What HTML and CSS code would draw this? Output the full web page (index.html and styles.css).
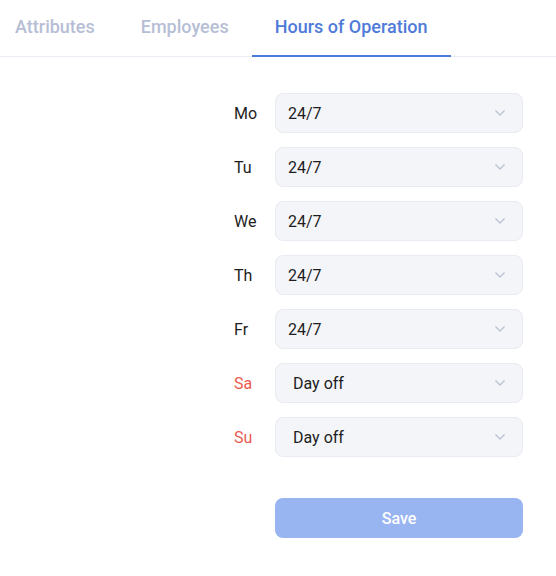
FILE: index.html
```html
<!DOCTYPE html>
<html lang="en">
<head>
<meta charset="utf-8">
<title>Hours of Operation</title>
<link rel="stylesheet" href="styles.css">
</head>
<body>
<nav class="tabs">
  <a class="tab tab-first">Attributes</a>
  <a class="tab">Employees</a>
  <a class="tab tab-active">Hours of Operation</a>
</nav>
<main class="content">
  <form class="hours">
    <div class="row"><span class="day">Mo</span><div class="select"><span class="value">24/7</span><svg class="chev" viewBox="0 0 12 8"><path d="M1.5 1.5 6 6l4.5-4.5"/></svg></div></div>
    <div class="row"><span class="day">Tu</span><div class="select"><span class="value">24/7</span><svg class="chev" viewBox="0 0 12 8"><path d="M1.5 1.5 6 6l4.5-4.5"/></svg></div></div>
    <div class="row"><span class="day">We</span><div class="select"><span class="value">24/7</span><svg class="chev" viewBox="0 0 12 8"><path d="M1.5 1.5 6 6l4.5-4.5"/></svg></div></div>
    <div class="row"><span class="day">Th</span><div class="select"><span class="value">24/7</span><svg class="chev" viewBox="0 0 12 8"><path d="M1.5 1.5 6 6l4.5-4.5"/></svg></div></div>
    <div class="row"><span class="day">Fr</span><div class="select"><span class="value">24/7</span><svg class="chev" viewBox="0 0 12 8"><path d="M1.5 1.5 6 6l4.5-4.5"/></svg></div></div>
    <div class="row"><span class="day day-off">Sa</span><div class="select"><span class="value value-off">Day off</span><svg class="chev" viewBox="0 0 12 8"><path d="M1.5 1.5 6 6l4.5-4.5"/></svg></div></div>
    <div class="row"><span class="day day-off">Su</span><div class="select"><span class="value value-off">Day off</span><svg class="chev" viewBox="0 0 12 8"><path d="M1.5 1.5 6 6l4.5-4.5"/></svg></div></div>
    <div class="row row-save"><span class="day"></span><button type="button" class="save">Save</button></div>
  </form>
</main>
</body>
</html>
```
FILE: styles.css
```css
* { box-sizing: border-box; }
html, body { margin: 0; padding: 0; background: #fff; }
body {
  font-family: Roboto, "Liberation Sans", sans-serif;
  color: #1d1d22;
  width: 556px;
  overflow: hidden;
}
.tabs {
  display: flex;
  border-bottom: 1px solid #e9ecf3;
  height: 57px;
}
.tab {
  display: block;
  padding: 16px 23px 0;
  font-size: 18px;
  font-weight: 500;
  color: #b6bed5;
  text-decoration: none;
  line-height: 22px;
  border-bottom: 2px solid transparent;
  margin-bottom: -1px;
}
.tab-first { padding-left: 15px; }
.tab-active {
  color: #4f7bd9;
  border-bottom-color: #4c79dc;
}
.content {
  display: flex;
  justify-content: flex-end;
  padding: 36px 33px 0 0;
}
.hours {
  display: flex;
  flex-direction: column;
  gap: 14px;
}
.row {
  display: flex;
  align-items: center;
}
.day {
  width: 41px;
  font-size: 16px;
  color: #1d1d22;
}
.day-off { color: #ec5a4f; }
.select {
  width: 248px;
  height: 40px;
  background: #f4f5f9;
  border: 1px solid #e8ebf2;
  border-radius: 8px;
  display: flex;
  align-items: center;
  justify-content: space-between;
  padding: 0 16px 0 12px;
}
.value { font-size: 16px; color: #1d1d22; }
.value-off { padding-left: 5px; }
.chev {
  width: 12px;
  height: 8px;
  fill: none;
  stroke: #bcc3d3;
  stroke-width: 1.4;
}
.row-save { margin-top: 27px; }
.save {
  width: 248px;
  height: 40px;
  border: 0;
  border-radius: 8px;
  background: #98b4f1;
  color: #fff;
  font-family: inherit;
  font-size: 16px;
  font-weight: 500;
}
```
